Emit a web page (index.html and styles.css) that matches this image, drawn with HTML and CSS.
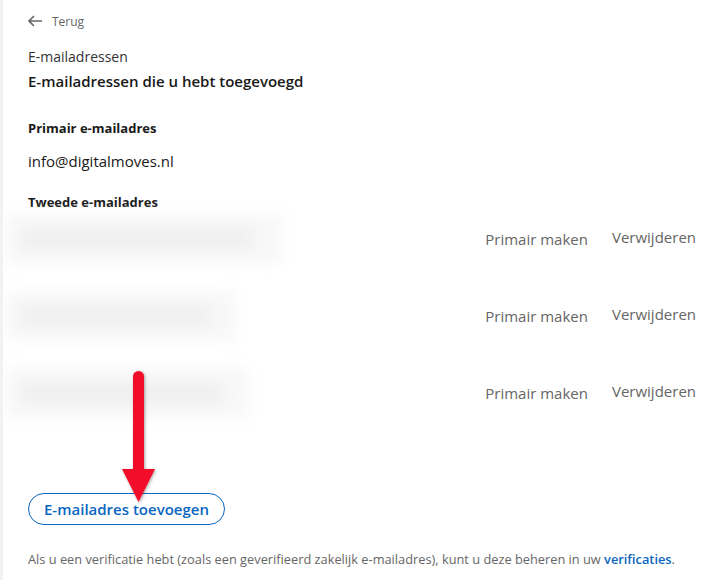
FILE: index.html
```html
<!DOCTYPE html>
<html lang="nl">
<head>
<meta charset="utf-8">
<link rel="stylesheet" href="styles.css">
</head>
<body>
<div class="page">
  <a class="back" href="#">
    <svg class="back-icon" width="14" height="12" viewBox="0 0 14 12"><path d="M6 1 1 6l5 5M1 6h13" fill="none" stroke="#666" stroke-width="1.6"/></svg>
    <span>Terug</span>
  </a>
  <div class="title">E-mailadressen</div>
  <h1 class="subtitle">E-mailadressen die u hebt toegevoegd</h1>

  <div class="label primary-label">Primair e-mailadres</div>
  <div class="email">info@digitalmoves.nl</div>

  <div class="label second-label">Tweede e-mailadres</div>

  <div class="rows">
    <div class="row">
      <div class="blur blur-1"><div class="blur-bar"></div></div>
      <div class="actions"><span class="make">Primair maken</span><span class="remove">Verwijderen</span></div>
    </div>
    <div class="row">
      <div class="blur blur-2"><div class="blur-bar"></div></div>
      <div class="actions"><span class="make">Primair maken</span><span class="remove">Verwijderen</span></div>
    </div>
    <div class="row">
      <div class="blur blur-3"><div class="blur-bar"></div></div>
      <div class="actions"><span class="make">Primair maken</span><span class="remove">Verwijderen</span></div>
    </div>
  </div>

  <button class="add">E-mailadres toevoegen</button>

  <p class="note">Als u een verificatie hebt (zoals een geverifieerd zakelijk e-mailadres), kunt u deze beheren in uw <a href="#">verificaties</a>.</p>

  <svg class="arrow" width="40" height="140" viewBox="0 0 40 140">
    <defs>
      <filter id="sh" x="-50%" y="-20%" width="200%" height="140%">
        <feDropShadow dx="1" dy="1" stdDeviation="1.5" flood-color="#000" flood-opacity="0.35"/>
      </filter>
    </defs>
    <g filter="url(#sh)" fill="#f20a2a">
      <rect x="14" y="4" width="11" height="104" rx="5.5"/>
      <path d="M3 102 H36 L19.5 135 Z"/>
    </g>
  </svg>
</div>
</body>
</html>
```

FILE: styles.css
```css
html, body {
  margin: 0;
  padding: 0;
  background: #fff;
}
body {
  font-family: "Open Sans", "Noto Sans", sans-serif;
  color: #191919;
}
.page {
  position: relative;
  min-height: 580px;
  border-left: 3px solid #f3f2ef;
  box-sizing: border-box;
  padding-left: 25px;
  padding-right: 20px;
  overflow: hidden;
}
.back {
  display: flex;
  align-items: center;
  gap: 10px;
  padding-top: 14px;
  height: 14px;
  color: #666;
  text-decoration: none;
  font-size: 12px;
}
.back-icon { display: block; }
.title {
  margin-top: 19px;
  font-size: 14px;
  color: #333;
  line-height: 20px;
}
.subtitle {
  margin: 4px 0 0;
  font-size: 15px;
  font-weight: 600;
  line-height: 20px;
  color: #191919;
}
.label {
  font-size: 13px;
  font-weight: 700;
  line-height: 18px;
  color: #191919;
}
.primary-label { margin-top: 28px; }
.email {
  margin-top: 13px;
  font-size: 15px;
  line-height: 22px;
  color: #191919;
}
.second-label { margin-top: 21px; }
.rows {
  margin-left: -21px;
  display: flex;
  flex-direction: column;
}
.row {
  display: flex;
  align-items: center;
  justify-content: space-between;
  height: 77px;
}
.row:first-child { margin-top: -11px; }
.blur {
  height: 50px;
  background: #f8f8f8;
  filter: blur(6px);
  display: flex;
  align-items: center;
  padding-left: 14px;
}
.blur-1 { width: 262px; }
.blur-2 { width: 215px; }
.blur-3 { width: 228px; }
.blur-bar {
  height: 20px;
  width: 88%;
  background: #eeeeee;
  filter: blur(5px);
}
.actions {
  display: flex;
  align-items: center;
  gap: 24px;
  font-size: 15px;
  color: #666;
  padding-right: 4px;
}
.remove { position: relative; top: -2px; }
.add {
  display: block;
  margin-top: 62px;
  height: 32px;
  padding: 0 15px;
  border: 1px solid #0a66c2;
  border-radius: 16px;
  background: #fff;
  color: #0a66c2;
  font-family: inherit;
  font-size: 15px;
  font-weight: 600;
}
.note {
  margin: 26px 0 0;
  font-size: 12.8px;
  line-height: 16px;
  color: #666;
}
.note a {
  color: #0a66c2;
  font-weight: 600;
  text-decoration: none;
}
.arrow {
  position: absolute;
  left: 116px;
  top: 367px;
}
```
